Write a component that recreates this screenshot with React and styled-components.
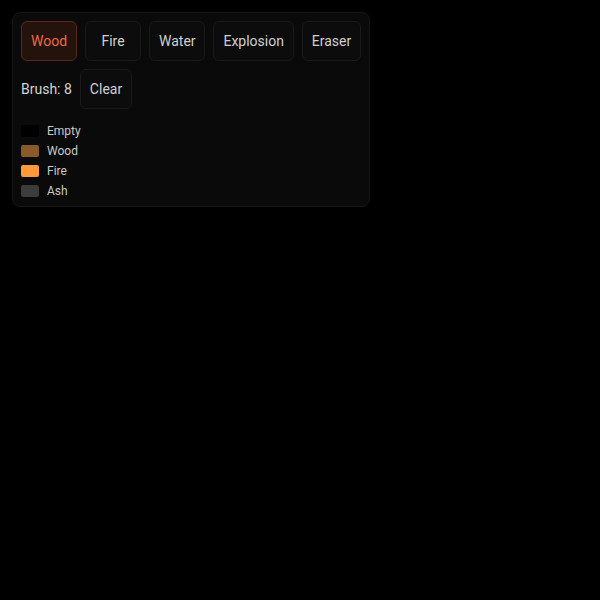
import React, { useState } from 'react';
import styled, { createGlobalStyle } from 'styled-components';

const TOOLS = ['Wood', 'Fire', 'Water', 'Explosion', 'Eraser'];

const LEGEND = [
    { name: 'Empty', color: '#000000' },
    { name: 'Wood', color: '#8b5a2b' },
    { name: 'Fire', color: '#ff9a3c' },
    { name: 'Ash', color: '#3c3c3c' },
];

export default function App() {
    const [tool, setTool] = useState('Wood');
    const brush = 8;

    return (
        <>
            <GlobalStyle />
            <Panel>
                <ToolRow>
                    { TOOLS.map(t => (
                        <ToolButton key={t} $tool $active={t === tool} onClick={() => setTool(t)}>
                            {t}
                        </ToolButton>
                    )) }
                </ToolRow>
                <ToolRow>
                    <BrushLabel>Brush: {brush}</BrushLabel>
                    <ToolButton>Clear</ToolButton>
                </ToolRow>
                <Legend>
                    { LEGEND.map(l => (
                        <LegendItem key={l.name}>
                            <Swatch color={l.color} />
                            {l.name}
                        </LegendItem>
                    )) }
                </Legend>
            </Panel>
        </>
    );
}

const GlobalStyle = createGlobalStyle`
    html, body {
        margin: 0;
        background: #000;
        font-family: Roboto, "Liberation Sans", sans-serif;
    }
`;

const Panel = styled.div`
    margin: 12px;
    width: 340px;
    padding: 8px 8px 5px;
    background: #0a0a0a;
    border: 1px solid #161616;
    border-radius: 8px;
    display: flex;
    flex-direction: column;
    gap: 8px;
`;

const ToolRow = styled.div`
    display: flex;
    align-items: center;
    gap: 8px;
`;

const ToolButton = styled.button`
    height: 40px;
    min-width: ${({$tool}) => $tool ? '56px' : '0'};
    padding: 0 9px;
    border-radius: 6px;
    font-family: inherit;
    font-size: 14px;
    cursor: pointer;
    background: ${({$active}) => $active ? '#24120d' : '#0c0c0c'};
    border: 1px solid ${({$active}) => $active ? '#5a2818' : '#1a1a1a'};
    color: ${({$active}) => $active ? '#ec6a44' : '#cfcfcf'};
`;

const BrushLabel = styled.span`
    color: #d4d4d4;
    font-size: 14px;
`;

const Legend = styled.div`
    display: flex;
    flex-direction: column;
    margin-top: 4px;
`;

const LegendItem = styled.div`
    display: flex;
    align-items: center;
    gap: 8px;
    height: 20px;
    font-size: 12px;
    color: #c8c8c8;
`;

const Swatch = styled.span`
    width: 18px;
    height: 12px;
    border-radius: 2px;
    background: ${({color}) => color};
`;
